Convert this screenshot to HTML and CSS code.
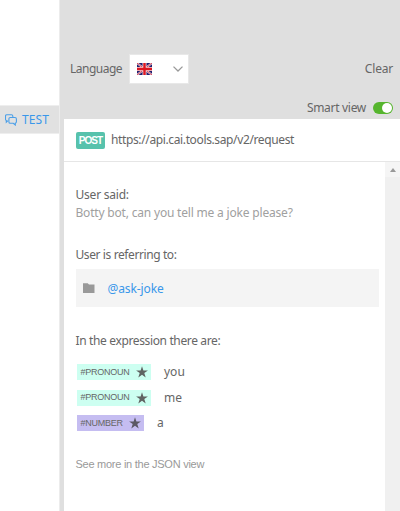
FILE: index.html
```html
<!DOCTYPE html>
<html lang="en">
<head>
<meta charset="utf-8">
<title>Test console</title>
<link rel="stylesheet" href="styles.css">
</head>
<body>
<aside class="sidebar">
  <div class="tab">
    <svg width="12" height="12" viewBox="0 0 12 12" fill="none" stroke="#4b9fe8" stroke-width="1.1"><path d="M3 6.6 1.3 8.2V6.5Q.5 6.2.5 5.3V2Q.5.7 1.8.7H6.5Q7.8.7 7.8 2V3.5"/><path d="M5.2 3.5H10Q11.4 3.5 11.4 4.9V7.8Q11.4 9 10.3 9.2V11L8.3 9.3H5.2Q3.9 9.3 3.9 8V4.8Q3.9 3.5 5.2 3.5Z"/></svg>
    <span class="tab-label">TEST</span>
  </div>
</aside>
<main class="console">
  <header class="toolbar">
    <div class="language-row">
      <span class="language">Language</span>
      <div class="select">
        <svg width="15" height="12" viewBox="0 0 15 12"><path fill="#22206f" d="M0 0h15v12H0z"/><path d="M0 0l15 12M15 0L0 12" stroke="#e8dce6" stroke-width="1.9"/><path d="M0 0l15 12M15 0L0 12" stroke="#d8202f" stroke-width=".8"/><path d="M7.5 0v12M0 6h15" stroke="#f3d9dc" stroke-width="4"/><path d="M7.5 0v12M0 6h15" stroke="#dd1620" stroke-width="2.4"/></svg>
        <svg width="10" height="6" viewBox="0 0 10 6" fill="none" stroke="#999" stroke-width="1.3"><path d="M.5.6 5 5 9.5.6"/></svg>
      </div>
      <span class="clear">Clear</span>
    </div>
    <div class="smart-row">
      <span class="smart">Smart view</span>
      <span class="toggle"><span class="knob"></span></span>
    </div>
  </header>
  <section class="panel">
    <div class="request"><span class="method">POST</span><span class="url">https://api.cai.tools.sap/v2/request</span></div>
    <div class="body">
      <div class="result">
        <p class="line said">User said:</p>
        <p class="line quote">Botty bot, can you tell me a joke please?</p>
        <p class="line referring">User is referring to:</p>
        <div class="intent">
          <svg width="12" height="10" viewBox="0 0 12 10" fill="#999"><path d="M0 .3H4.7L6 1.5H11.5V10H0Z"/></svg>
          <span class="intent-name">@ask-joke</span>
        </div>
        <p class="line expression">In the expression there are:</p>
        <ul class="entities">
          <li><span class="tag">#PRONOUN<svg width="12" height="12" viewBox="0 0 12 12" fill="#606462"><path d="M6 .2 7.4 4.4H11.9L8.3 7 9.7 11.4 6 8.7 2.3 11.4 3.7 7 .1 4.4H4.6Z"/></svg></span><span class="word">you</span></li>
          <li><span class="tag">#PRONOUN<svg width="12" height="12" viewBox="0 0 12 12" fill="#606462"><path d="M6 .2 7.4 4.4H11.9L8.3 7 9.7 11.4 6 8.7 2.3 11.4 3.7 7 .1 4.4H4.6Z"/></svg></span><span class="word">me</span></li>
          <li><span class="tag number">#NUMBER<svg width="12" height="12" viewBox="0 0 12 12" fill="#5b5864"><path d="M6 .2 7.4 4.4H11.9L8.3 7 9.7 11.4 6 8.7 2.3 11.4 3.7 7 .1 4.4H4.6Z"/></svg></span><span class="word">a</span></li>
        </ul>
        <p class="more">See more in the JSON view</p>
      </div>
      <div class="scrollbar"><div class="scroll-button"><svg width="6" height="4" viewBox="0 0 6 4" fill="#999"><path d="M3 0 6 4H0Z"/></svg></div></div>
    </div>
  </section>
</main>
</body>
</html>
```
FILE: styles.css
```css
* { box-sizing: border-box; }
body { margin: 0; width: 400px; height: 511px; display: flex; overflow: hidden; background: #fff; color: #666; font: 12px/18px "Noto Sans", sans-serif; }
p, ul { margin: 0; padding: 0; list-style: none; }
svg { display: block; flex: none; }
span { white-space: nowrap; }
.sidebar { width: 60px; padding-top: 105px; border-right: 1px solid #ececec; }
.tab { height: 29px; padding-left: 5px; display: flex; align-items: center; background: #e1e1e1; border-top: 1px solid #eee; border-bottom: 1px solid #eee; }
.tab-label { margin-left: 5px; color: #3997ea; font-size: 12px; letter-spacing: .1px; }
.console { width: 340px; background: #dfdfdf; padding-left: 4px; }
.toolbar { height: 119px; padding: 54px 7px 0 6px; }
.language-row { display: flex; align-items: center; height: 30px; }
.language { width: 59px; letter-spacing: -.5px; }
.select { width: 60px; height: 30px; background: #fff; border: 1px solid #e8e8e8; display: flex; align-items: center; justify-content: space-between; padding: 0 5px 0 7px; }
.clear { margin-left: auto; letter-spacing: -.2px; }
.smart-row { display: flex; align-items: center; justify-content: flex-end; height: 18px; margin-top: 15px; }
.smart { letter-spacing: -.3px; }
.toggle { width: 20px; height: 12px; border-radius: 6px; background: #56b52e; margin-left: 7px; padding: 1px; display: flex; justify-content: flex-end; }
.knob { width: 10px; height: 10px; border-radius: 50%; background: #fff; }
.panel { height: 392px; background: #fff; }
.request { height: 43px; display: flex; align-items: center; padding-left: 12px; border-bottom: 1px solid #e6e6e6; }
.method { width: 29px; height: 17px; border-radius: 2px; background: #57c2ac; color: #fff; font: bold 10px/18px "Liberation Sans", sans-serif; text-align: center; letter-spacing: -.9px; }
.url { margin-left: 6px; letter-spacing: -.37px; }
.body { height: 349px; display: flex; }
.result { width: 321px; padding: 24px 6px 0 11.5px; }
.said { letter-spacing: -.22px; }
.quote { color: #a0a0a0; letter-spacing: -.19px; }
.referring { margin-top: 24px; letter-spacing: -.4px; }
.expression { letter-spacing: -.36px; }
.intent { height: 38px; margin: 5px 0 25px; background: #f4f4f4; display: flex; align-items: center; padding-left: 7px; }
.intent-name { margin: 1px 0 0 13px; color: #3997ea; letter-spacing: -.1px; }
.entities { margin-top: 14px; margin-left: 1.5px; }
.entities li { height: 16px; margin-bottom: 9.5px; display: flex; align-items: center; }
.tag { width: 74px; height: 16px; background: #cdfff1; padding: 0 3px 0 3.5px; display: flex; align-items: center; justify-content: space-between; font: 9px/15px "Liberation Sans", sans-serif; letter-spacing: -.25px; }
.number { width: 67px; background: #c5bdf1; }
.word { margin-left: 13px; }
.more { color: #999; margin-top: 24px; font: 11px/18px "Liberation Sans", sans-serif; letter-spacing: -.26px; }
.scrollbar { width: 15px; background: #f0f0f0; }
.scroll-button { height: 15px; display: flex; align-items: center; justify-content: center; background: #f5f5f5; }
```
